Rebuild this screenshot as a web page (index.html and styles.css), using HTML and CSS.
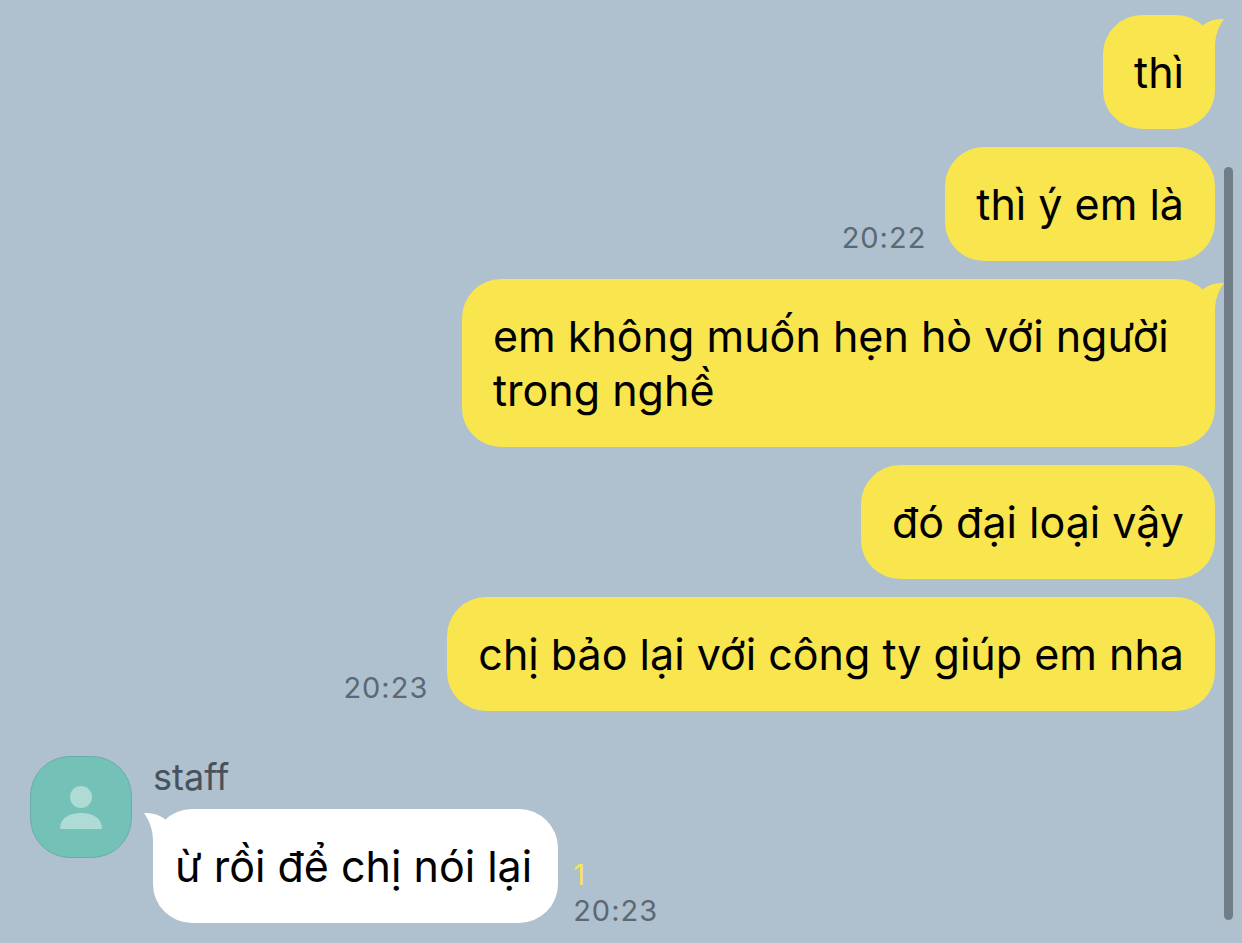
FILE: index.html
```
<!DOCTYPE html>
<html lang="vi">
<head>
    <meta charset="UTF-8">
    <meta name="viewport" content="width=device-width, initial-scale=1.0">
    <title>Chat</title>
    <link rel="stylesheet" href="styles.css">
</head>
<body>
    <main class="chat">
        <div class="message sent">
            <div class="bubble">thì
                <svg class="tail" viewBox="0 0 24 40" aria-hidden="true"><path d="M1 8C8 2 15 1 23 1C18 8 14 17 14 29V40L2 30Z"/></svg>
            </div>
        </div>
        <div class="message sent">
            <time class="time">20:22</time>
            <div class="bubble">thì ý em là</div>
        </div>
        <div class="message sent">
            <div class="bubble multiline">em không muốn hẹn hò với người trong nghề
                <svg class="tail" viewBox="0 0 24 40" aria-hidden="true"><path d="M1 8C8 2 15 1 23 1C18 8 14 17 14 29V40L2 30Z"/></svg>
            </div>
        </div>
        <div class="message sent">
            <div class="bubble">đó đại loại vậy</div>
        </div>
        <div class="message sent">
            <time class="time">20:23</time>
            <div class="bubble">chị bảo lại với công ty giúp em nha</div>
        </div>

        <div class="message received">
            <div class="avatar">
                <svg viewBox="0 0 44 44" aria-hidden="true">
                    <circle cx="22" cy="12" r="11"/>
                    <path d="M1 44C1 33 10 28 22 28S43 33 43 44Z"/>
                </svg>
            </div>
            <div class="content">
                <div class="name">staff</div>
                <div class="row">
                    <div class="bubble">ừ rồi để chị nói lại
                        <svg class="tail" viewBox="0 0 24 40" aria-hidden="true"><path d="M23 8C16 2 9 1 1 1C6 8 10 17 10 29V40L22 30Z"/></svg>
                    </div>
                    <div class="info">
                        <span class="count">1</span>
                        <time class="time">20:23</time>
                    </div>
                </div>
            </div>
        </div>
    </main>
    <div class="scrollbar"></div>
</body>
</html>
```
FILE: styles.css
```
* {
    box-sizing: border-box;
}

body {
    margin: 0;
    min-height: 100vh;
    position: relative;
    background-color: #afc0cf;
    color: #000;
    font-family: Inter, "Liberation Sans", sans-serif;
}

.chat {
    display: flex;
    flex-direction: column;
    gap: 18px;
    padding: 15px 27px 21px 30px;
}

.message {
    display: flex;
}

.sent {
    justify-content: flex-end;
    align-items: flex-end;
    gap: 19px;
}

.bubble {
    position: relative;
    padding: 30px 31px;
    border-radius: 39px;
    background-color: #f9e54d;
    font-size: 43px;
    line-height: 54px;
}

.multiline {
    max-width: 753px;
}

/* Pico del globo, sobresale por la esquina superior */
.tail {
    position: absolute;
    top: 3px;
    right: -10px;
    width: 24px;
    height: 40px;
    fill: #f9e54d;
}

.time {
    color: #5c6873;
    font-size: 29px;
    line-height: 24px;
    letter-spacing: 1px;
}

.sent .time {
    padding-bottom: 11px;
}

.received {
    align-items: flex-start;
    gap: 21px;
    margin-top: 27px;
}

.avatar {
    display: flex;
    justify-content: center;
    align-items: center;
    width: 102px;
    height: 102px;
    border: 1px solid #68aea8;
    border-radius: 40px;
    background-color: #74c1b7;
}

.avatar svg {
    width: 44px;
    height: 44px;
    fill: #aedcd5;
}

.name {
    padding-bottom: 11px;
    color: #47525d;
    font-size: 36px;
    line-height: 42px;
    font-variant-ligatures: none;
}

.row {
    display: flex;
    align-items: flex-end;
    gap: 15px;
}

.received .bubble {
    padding: 30px 26px 30px 22px;
    background-color: #fff;
}

.received .tail {
    right: auto;
    left: -10px;
    fill: #fff;
}

.info {
    display: flex;
    flex-direction: column;
    gap: 6px;
}

.count {
    color: #f7e64f;
    font-size: 29px;
    line-height: 36px;
}

.scrollbar {
    position: absolute;
    top: 167px;
    right: 9px;
    bottom: 24px;
    width: 9px;
    border-radius: 5px;
    background-color: #717e88;
}
```
